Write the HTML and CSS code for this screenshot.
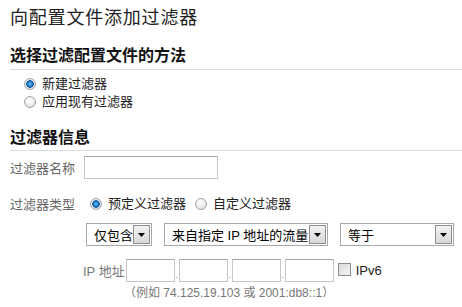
FILE: index.html
```html
<!DOCTYPE html>
<html lang="zh-CN">
<head>
<meta charset="utf-8">
<title>向配置文件添加过滤器</title>
<link rel="stylesheet" href="styles.css">
</head>
<body>
<div class="page">
  <h1 class="title">向配置文件添加过滤器</h1>

  <h2 class="section-title">选择过滤配置文件的方法</h2>
  <div class="choice-list">
    <div class="choice"><span class="radio checked"></span><span>新建过滤器</span></div>
    <div class="choice"><span class="radio"></span><span>应用现有过滤器</span></div>
  </div>

  <h2 class="section-title second">过滤器信息</h2>

  <div class="field-row name-row">
    <span class="field-label">过滤器名称</span>
    <span class="text-input name-input"></span>
  </div>

  <div class="field-row type-row">
    <span class="field-label">过滤器类型</span>
    <div class="choice inline"><span class="radio checked"></span><span>预定义过滤器</span></div>
    <div class="choice inline second-choice"><span class="radio"></span><span>自定义过滤器</span></div>
  </div>

  <div class="select-row">
    <div class="select sel-include">
      <span class="select-text">仅包含</span>
      <span class="select-btn"><svg width="7" height="4" viewBox="0 0 7 4"><path d="M0 0H7L3.5 4Z" fill="#000"/></svg></span>
    </div>
    <div class="select sel-source">
      <span class="select-text">来自指定 IP 地址的流量</span>
      <span class="select-btn"><svg width="7" height="4" viewBox="0 0 7 4"><path d="M0 0H7L3.5 4Z" fill="#000"/></svg></span>
    </div>
    <div class="select sel-match">
      <span class="select-text">等于</span>
      <span class="select-btn"><svg width="7" height="4" viewBox="0 0 7 4"><path d="M0 0H7L3.5 4Z" fill="#000"/></svg></span>
    </div>
  </div>

  <div class="ip-row">
    <span class="ip-label">IP 地址</span>
    <span class="text-input ip-box"></span><span class="ip-dot">.</span><span class="text-input ip-box"></span><span class="ip-dot">.</span><span class="text-input ip-box"></span><span class="ip-dot">.</span><span class="text-input ip-box"></span>
    <span class="checkbox"></span>
    <span class="ipv6">IPv6</span>
  </div>
  <div class="ip-example">（例如 74.125.19.103 或 2001:db8::1）</div>
</div>
</body>
</html>
```

FILE: styles.css
```css
* { box-sizing: border-box; }

html, body {
  margin: 0;
  padding: 0;
  background: #ffffff;
}

body {
  font-family: "Liberation Sans", "Noto Sans CJK SC", sans-serif;
  font-size: 13px;
  color: #222;
}

.page {
  padding: 6px 0 0 10px;
  width: 462px;
}

.title {
  margin: 0;
  font-size: 18px;
  line-height: 24px;
  font-weight: normal;
  letter-spacing: 0.8px;
  color: #222;
}

.section-title {
  margin: 16px 0 0 0;
  font-size: 16px;
  line-height: 20px;
  font-weight: bold;
  color: #111;
  padding-bottom: 3px;
  border-bottom: 1px solid #dcdcdc;
}

.section-title.second {
  margin-top: 17px;
  padding-bottom: 2px;
}

.choice-list {
  margin-top: 5px;
  padding-left: 14px;
  display: flex;
  flex-direction: column;
}

.choice {
  display: flex;
  align-items: center;
  gap: 6px;
  height: 18px;
  line-height: 18px;
  color: #222;
}

.radio {
  width: 12px;
  height: 12px;
  border-radius: 50%;
  border: 1px solid #a4a4a4;
  background: radial-gradient(circle at 40% 35%, #ffffff 0%, #ececec 55%, #cfcfcf 100%);
  flex: none;
  position: relative;
}

.radio.checked {
  background:
    radial-gradient(circle at 50% 50%, #7fc4f4 0px, #2a86d6 2px, #0d4f9a 3.5px, rgba(0,0,0,0) 4px),
    radial-gradient(circle at 40% 35%, #ffffff 0%, #ececec 55%, #cfcfcf 100%);
}

.field-row {
  display: flex;
  align-items: center;
}

.field-label {
  width: 74px;
  color: #666;
  flex: none;
}

.name-row {
  margin-top: 5px;
  height: 23px;
}

.text-input {
  display: inline-block;
  height: 23px;
  border: 1px solid #c6c6c6;
  border-top-color: #a6a6a6;
  background: #fff;
}

.name-input {
  width: 134px;
}

.type-row {
  margin-top: 16px;
  height: 17px;
}

.choice.inline {
  margin-left: 6px;
  height: 17px;
}

.choice.inline.second-choice {
  margin-left: 9px;
}

.select-row {
  display: flex;
  gap: 12px;
  margin-top: 11px;
  padding-left: 76px;
}

.select {
  height: 23px;
  border: 1px solid #a9a9a9;
  background: #fff;
  display: flex;
  align-items: center;
  justify-content: space-between;
  padding: 1px;
  color: #000;
}

.select-text {
  padding-left: 6px;
  white-space: nowrap;
}

.sel-include { width: 66px; }
.sel-source { width: 164px; }
.sel-match { width: 114px; }

.select-btn {
  width: 17px;
  height: 19px;
  border: 1px solid #8e8e8e;
  background: linear-gradient(#f2f2f2, #d9d9d9);
  display: flex;
  align-items: center;
  justify-content: center;
  flex: none;
}

.ip-row {
  display: flex;
  align-items: center;
  margin-top: 13px;
  padding-left: 73px;
  height: 23px;
}

.ip-label {
  color: #777;
  margin-right: 1px;
  white-space: nowrap;
}

.ip-box {
  width: 49px;
}

.ip-dot {
  width: 4px;
  text-align: center;
  font-size: 10px;
  color: #c9a040;
  align-self: flex-end;
  line-height: 14px;
}

.checkbox {
  width: 13px;
  height: 13px;
  margin-left: 4px;
  margin-top: -3px;
  border: 1px solid #8c8c8c;
  background: linear-gradient(135deg, #d8d8d8, #f6f6f6);
  flex: none;
}

.ipv6 {
  margin-left: 5px;
  color: #222;
}

.ip-example {
  margin-top: 3px;
  padding-left: 114px;
  font-size: 12px;
  line-height: 16px;
  color: #777;
}
```
